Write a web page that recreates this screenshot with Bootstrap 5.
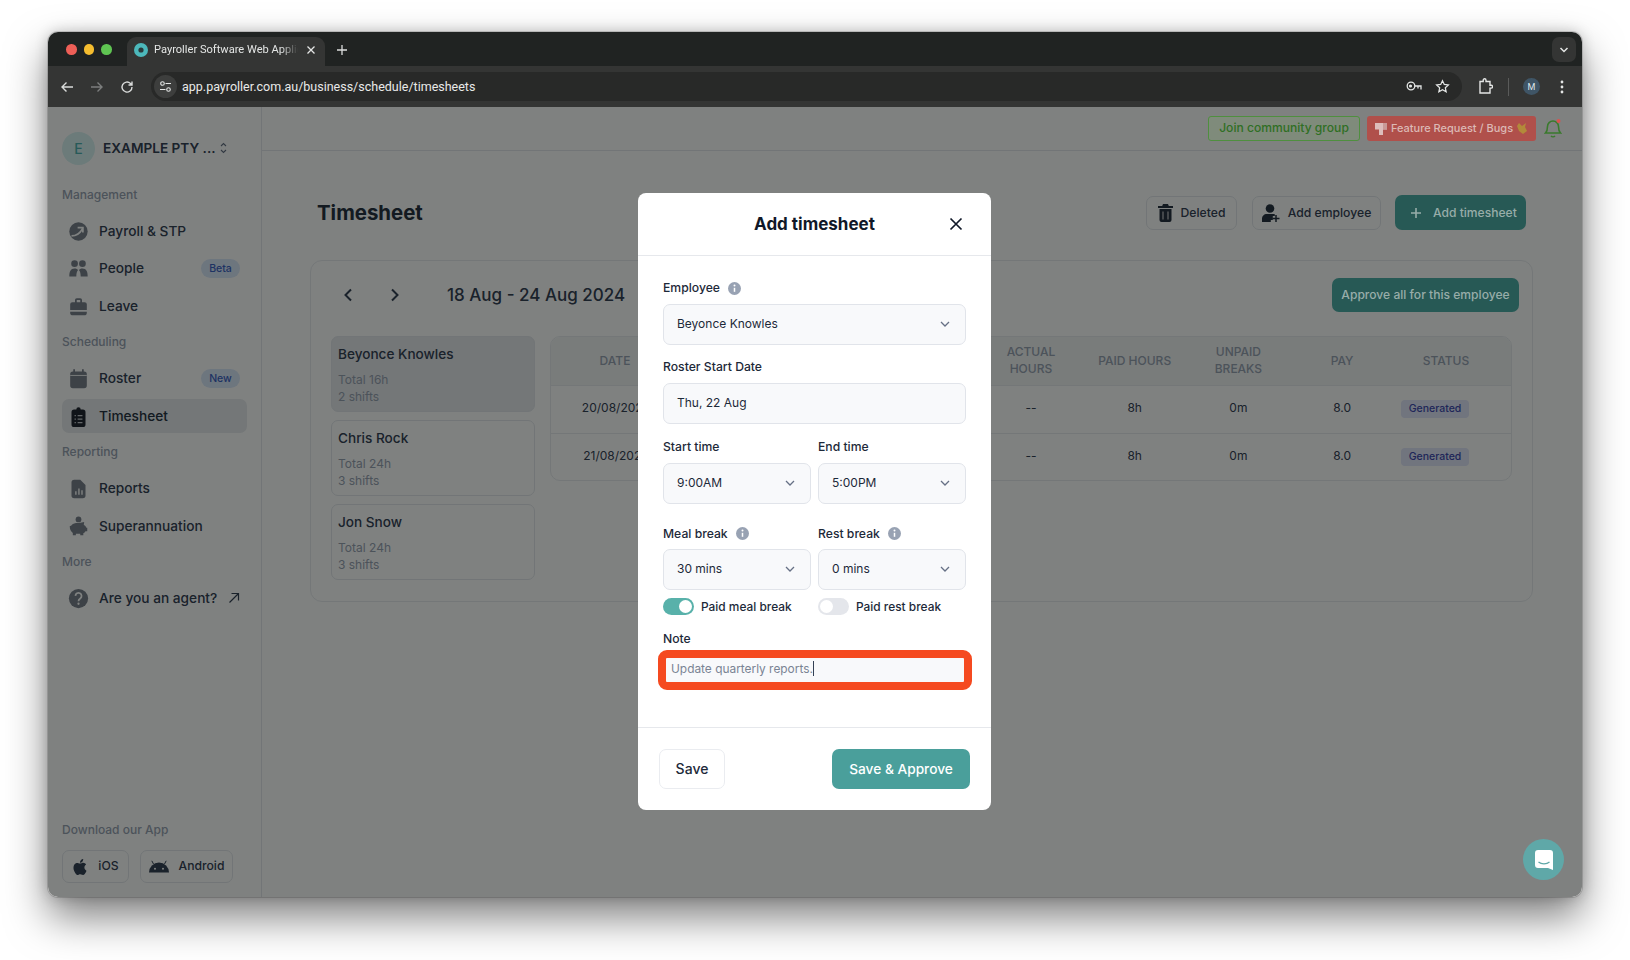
<!doctype html>
<html>
<head>
  <meta charset="utf-8">
  <title>Timesheet</title>
  <link href="https://cdn.jsdelivr.net/npm/bootstrap@5.3.0/dist/css/bootstrap.min.css" rel="stylesheet">
  <style>
    html, body { height: 100%; }
    body { background: #fff; margin: 0; padding: 32px 48px 63px; overflow: hidden; font-family: Inter, "Liberation Sans", sans-serif; color: #344054; }
    svg { display: block; flex: none; }

    /* browser window */
    .browser { height: 865px; display: flex; flex-direction: column; border-radius: 10px; overflow: hidden; box-shadow: 0 0 0 1px rgba(0,0,0,.14), 0 20px 42px rgba(0,0,0,.5), 0 0 14px rgba(0,0,0,.2); background: #fff; }
    .tabstrip { height: 34px; background: #202322; display: flex; align-items: flex-end; padding-left: 18px; flex: none; }
    .lights { width: 61px; height: 100%; display: flex; align-items: center; gap: 7px; padding-top: 1px; }
    .lights i { width: 10.5px; height: 10.5px; border-radius: 50%; }
    .chrome-tab { width: 198px; height: 29px; background: #343534; border-radius: 9px 9px 0 0; display: flex; align-items: center; padding: 0 9px 4px 7px; color: #e4e6e5; font: 11.1px Roboto, "Liberation Sans", sans-serif; }
    .tab-title { width: 144px; margin-left: 6px; overflow: hidden; white-space: nowrap; -webkit-mask-image: linear-gradient(90deg, #000 88%, transparent); mask-image: linear-gradient(90deg, #000 88%, transparent); }
    .new-tab { margin: 0 0 10px 11px; }
    .tab-list { width: 24px; height: 25px; background: #343534; border-radius: 7px; margin: 0 6px 4px auto; display: flex; align-items: center; justify-content: center; }
    .toolbar { height: 41px; background: #343534; display: flex; align-items: center; padding: 0 0 0 11px; flex: none; }
    .toolbar > svg { margin-right: 14px; }
    .omnibox { width: 1311px; height: 29px; margin-left: 2px; margin-right: 16px; background: #282928; border-radius: 15px; display: flex; align-items: center; padding: 0 12px 0 3px; color: #e8e9e8; font: 12.5px Roboto, "Liberation Sans", sans-serif; gap: 5px; flex: none; }
    .site-chip { width: 23px; height: 23px; border-radius: 50%; background: #3d3e3d; display: flex; align-items: center; justify-content: center; }
    .profile-dot { width: 17px; height: 17px; border-radius: 50%; background: #3f5566; color: #dfe6ea; font: 9px Roboto, sans-serif; display: flex; align-items: center; justify-content: center; margin: 0 20px 0 14px; }
    .tool-sep { width: 1px; height: 18px; background: #5a5b5a; margin-left: 1px; }

    /* app */
    .appframe { flex: 1; position: relative; display: flex; background: #fff; min-height: 0; }
    .dim-layer { position: absolute; inset: 0; background: rgba(0,4,2,.5); z-index: 5; }
    .sidebar { width: 214px; flex: none; border-right: 1px solid #e4e7ec; padding: 24px 14px 0; display: flex; flex-direction: column; }
    .workspace { display: flex; align-items: center; height: 34px; margin-bottom: 22px; font-weight: 600; font-size: 13.6px; color: #344054; white-space: nowrap; }
    .ws-avatar { width: 33px; height: 33px; border-radius: 50%; background: #d8f2f2; color: #4fb0b0; display: flex; align-items: center; justify-content: center; margin-right: 8px; font-weight: 500; font-size: 14px; }
    .side-head { font-size: 12px; font-weight: 500; color: #98a2b3; height: 16px; line-height: 16px; margin-bottom: 11.2px; }
    .side-item { height: 34px; margin-bottom: 3.5px; display: flex; align-items: center; padding: 0 7px 0 6px; border-radius: 7px; font-size: 13.7px; font-weight: 500; color: #344054; white-space: nowrap; }
    .side-item > svg:first-child { margin-right: 10px; width: 21px; height: 21px; color: #7a808c; }
    .side-item.on { background: #e8eaee; color: #263040; }
    .side-item.on > svg:first-child { color: #202530; }
    .side-tag { margin-left: auto; width: 39px; height: 19px; border-radius: 10px; background: #dbe8fb; color: #3d62c4; font-size: 10.5px; font-weight: 500; display: flex; align-items: center; justify-content: center; }
    .side-group { margin-top: 7.7px; }
    .app-links { margin-top: auto; padding-bottom: 14px; }
    .app-links .side-head { margin-bottom: 12px; }
    .store-row { display: flex; gap: 11px; }
    .store-btn { height: 33px; border: 1px solid #e4e7ec; border-radius: 7px; display: flex; align-items: center; justify-content: center; font-size: 12.2px; font-weight: 500; color: #344054; gap: 10px; }

    .workarea { flex: 1; min-width: 0; }
    .top-strip { height: 44px; border-bottom: 1px solid #e4e7ec; display: flex; align-items: flex-start; justify-content: flex-end; padding: 9px 20px 0 0; }
    .community-btn { position: relative; z-index: 6; height: 25px; width: 152px; border: 1px solid #4f8f3f; border-radius: 3px; background: #7f8b7b; color: #2f6f24; font-size: 12.1px; font-weight: 500; display: flex; align-items: center; justify-content: center; white-space: nowrap; }
    .feature-btn { position: relative; z-index: 6; height: 25px; width: 169px; margin-left: 7px; border-radius: 3px; background: #b0504b; color: #dcb9b5; font-size: 11px; font-weight: 500; display: flex; align-items: center; justify-content: center; gap: 4px; white-space: nowrap; }
    .bell-wrap { position: relative; z-index: 6; margin: 2px 0 0 8px; }
    .page-head { display: flex; align-items: center; height: 35px; margin: 44px 56px 0 55px; }
    .page-title { font-size: 20.4px; font-weight: 700; margin: 1px auto 0 0; color: #263040; }
    .plain-btn { height: 34px; padding-top: 1px; border: 1px solid #e4e7ec; border-radius: 7px; display: flex; align-items: center; justify-content: center; gap: 8px; font-size: 12.2px; font-weight: 500; color: #344054; white-space: nowrap; }
    .teal-dim { position: relative; z-index: 6; background: #275955; border-radius: 7px; color: #98ada9; display: flex; align-items: center; font-size: 12.1px; font-weight: 500; white-space: nowrap; }

    .sheet-card { margin: 30px 49px 0 48px; height: 342px; border: 1px solid #e9ebef; border-radius: 12px; padding: 17px 20px 0 20px; }
    .sheet-nav { display: flex; align-items: center; height: 34px; margin-bottom: 24px; }
    .sheet-nav > svg { margin-left: 12px; margin-right: 25px; }
    .sheet-date { font-size: 17px; font-weight: 500; margin-left: 22px; padding-top: 1px; color: #344054; }
    .sheet-body { display: flex; gap: 15px; align-items: flex-start; }
    .emp-list { width: 204px; flex: none; display: flex; flex-direction: column; gap: 8px; }
    .emp-card { height: 76px; border: 1px solid #e4e7ec; border-radius: 7px; padding: 7px 6px; font-size: 12px; line-height: 17px; color: #98a2b3; }
    .emp-card.on { background: #e8eaee; }
    .emp-name { font-size: 13.6px; font-weight: 500; color: #344054; line-height: 20px; margin-bottom: 7px; }
    .sheet-table-wrap { flex: 1; border: 1px solid #e9ebef; border-radius: 10px; overflow: hidden; height: 145px; }
    .sheet-table { width: 100%; table-layout: fixed; margin: 0; font-size: 12px; }
    .sheet-table th, .sheet-table td { height: 48px; text-align: center; vertical-align: middle; padding: 0 6px; border-bottom: 1px solid #e9ebef; }
    .sheet-table th { background: #f2f4f5; font-weight: 500; color: #98a2b3; font-size: 12px; line-height: 17px; padding-bottom: 1px; }
    .sheet-table td { color: #344054; white-space: nowrap; padding: 0 0 2px; }
    .sheet-table td:first-child { padding-left: 13px; }
    .sheet-table th:first-child { padding-left: 17px; }
    .sheet-table td:last-child { padding-right: 13px; }
    .sheet-table th:last-child { padding-right: 19px; }
    .col-edge { width: 117px; }
    .status-tag { display: inline-block; background: #e2e6fa; color: #3f49b0; border-radius: 4px; font-size: 10.5px; font-weight: 500; line-height: 18px; padding: 0 8px; margin-left: -22px; }

    /* dialog */
    .sheet-modal { position: absolute; left: 590px; top: 86px; width: 353px; height: 617px; z-index: 7; border: 0; border-radius: 8px; overflow: hidden; background: #fff; }
    .sheet-modal .modal-header { height: 63px; flex: none; padding: 2px 25px 0; justify-content: center; position: relative; border-bottom: 1px solid #e6e8ec; }
    .sheet-modal .modal-title { font-size: 17px; font-weight: 700; color: #101828; }
    .sheet-modal .close-x { position: absolute; right: 28px; top: 24px; }
    .sheet-modal .modal-body { padding: 24px 25px 0; height: 471px; flex: none; }
    .sheet-modal .modal-footer { border-top: 1px solid #e6e8ec; padding: 21px; flex: 1; align-items: flex-start; display: flex; justify-content: space-between; flex-wrap: nowrap; }
    .sheet-modal .modal-footer > * { margin: 0; }
    .fld-label { display: flex; align-items: center; gap: 8px; font-size: 12.2px; font-weight: 500; color: #1d2939; height: 16px; margin-bottom: 7.6px; }
    .fld-box { height: 41px; border: 1px solid #e1e4ea; border-radius: 7px; background: #f8f9fb; display: flex; align-items: center; justify-content: space-between; padding: 0 15px 1px 13px; font-size: 12px; color: #1d2939; margin-bottom: 15px; }
    .fld-row { display: grid; grid-template-columns: 1fr 1fr; column-gap: 7px; }
    .fld-row .fld-box { margin-bottom: 0; }
    .fld-row + .fld-row { margin-top: 22px; }
    .toggle-line { display: flex; align-items: center; gap: 7px; height: 17px; margin: 8px 0 0; font-size: 11.9px; font-weight: 500; color: #1d2939; }
    .toggle-pill { width: 31px; height: 17px; border-radius: 9px; background: #e4e6eb; position: relative; flex: none; }
    .toggle-pill::after { content: ""; position: absolute; left: 2px; top: 2px; width: 13px; height: 13px; border-radius: 50%; background: #fff; }
    .toggle-pill.lit { background: #58b1aa; }
    .toggle-pill.lit::after { left: 16px; }
    .note-label { margin: 16px 0 2.6px; }
    .note-mark { margin: 0 -6px 0 -5px; height: 40px; border: 8px solid #f54a20; border-radius: 9px; background: #f8f9fb; display: flex; align-items: center; padding: 0 5px 3px; font-size: 11.9px; color: #7a8494; }
    .caret-bar { width: 1px; height: 15px; background: #344054; }
    .save-btn { width: 66px; height: 40px; background: #fff; border: 1px solid #eaecf0; border-radius: 7px; font-size: 14px; font-weight: 500; color: #1d2939; padding: 0 0 2px; }
    .approve-btn { width: 138px; height: 40px; background: #4a9f9b; border: 0; border-radius: 7px; font-size: 13.7px; font-weight: 500; color: #fff; padding: 0; }
    .chat-fab { position: absolute; right: 18px; bottom: 17px; width: 41px; height: 41px; border-radius: 50%; background: #5fa8a8; z-index: 6; display: flex; align-items: center; justify-content: center; }
  </style>
</head>
<body>
  <div class="browser">
    <!-- browser chrome -->
    <div class="tabstrip">
      <div class="lights"><i style="background:#ee5f57"></i><i style="background:#f5bd2f"></i><i style="background:#5fc552"></i></div>
      <div class="chrome-tab">
        <svg width="14" height="14" viewBox="0 0 14 14"><circle cx="7" cy="7" r="7" fill="#4cb8bb"/><circle cx="7" cy="7" r="2.6" fill="#2b3a3c"/></svg>
        <span class="tab-title">Payroller Software Web Applic</span>
        <svg class="ms-auto" width="10" height="10" viewBox="0 0 10 10"><path d="M1.5 1.5l7 7M8.5 1.5l-7 7" stroke="#e4e6e5" stroke-width="1.3"/></svg>
      </div>
      <svg class="new-tab" width="12" height="12" viewBox="0 0 12 12"><path d="M6 1v10M1 6h10" stroke="#dcdedd" stroke-width="1.3"/></svg>
      <div class="tab-list"><svg width="10" height="6" viewBox="0 0 10 6"><path d="M1.5 1L5 4.5 8.5 1" fill="none" stroke="#e4e6e5" stroke-width="1.5"/></svg></div>
    </div>
    <div class="toolbar">
      <svg width="16" height="16" viewBox="0 0 16 16"><path d="M14 8H3M7.5 3.5L3 8l4.5 4.5" fill="none" stroke="#d9dbda" stroke-width="1.4"/></svg>
      <svg width="16" height="16" viewBox="0 0 16 16"><path d="M2 8h11M8.5 3.5L13 8l-4.5 4.5" fill="none" stroke="#7c7e7d" stroke-width="1.4"/></svg>
      <svg width="16" height="16" viewBox="0 0 16 16"><path d="M13 8a5 5 0 1 1-1.5-3.5L13 6M13 2.5V6H9.5" fill="none" stroke="#d9dbda" stroke-width="1.4"/></svg>
      <div class="omnibox">
        <span class="site-chip"><svg width="13" height="13" viewBox="0 0 13 13" fill="none" stroke="#e4e6e5" stroke-width="1.1"><circle cx="3.5" cy="3.5" r="1.8"/><path d="M6.5 3.5H12M1 9.5h5.5"/><circle cx="9.5" cy="9.5" r="1.8"/></svg></span>
        <span>app.payroller.com.au/business/schedule/timesheets</span>
        <svg class="ms-auto" width="16" height="14" viewBox="0 0 16 14" fill="none" stroke="#e4e6e5" stroke-width="1.3"><circle cx="5" cy="6" r="3.8"/><circle cx="4.5" cy="6" r=".9" fill="#e4e6e5"/><path d="M8.8 6H15v3.5M12 6v2.5"/></svg>
        <svg class="ms-2" width="15" height="15" viewBox="0 0 16 16" fill="none" stroke="#e4e6e5" stroke-width="1.3"><path d="M8 1.8l1.9 4 4.4.5-3.300 3 .9 4.400L8 11.500l-3.900 2.200.9-4.400-3.300-3 4.400-.5z"/></svg>
      </div>
      <svg width="15" height="17" viewBox="0 0 15 17" fill="none" stroke="#e4e6e5" stroke-width="1.4"><path d="M2 3.500h3.200V2.200a1.400 1.400 0 0 1 2.800 0v1.300H12V7.300h1.200a1.400 1.400 0 0 1 0 2.800H12V15H2z"/></svg>
      <span class="tool-sep"></span>
      <span class="profile-dot">M</span>
      <svg width="4" height="14" viewBox="0 0 4 14" fill="#e4e6e5" style="margin:0"><circle cx="2" cy="2" r="1.4"/><circle cx="2" cy="7" r="1.4"/><circle cx="2" cy="12" r="1.4"/></svg>
    </div>

    <!-- app -->
    <div class="appframe">
      <aside class="sidebar">
        <div class="workspace">
          <span class="ws-avatar">E</span>EXAMPLE PTY ...
          <svg class="ms-1" width="7" height="12" viewBox="0 0 7 12" fill="none" stroke="#667085" stroke-width="1.1"><path d="M1 4l2.500-2.500L6 4M1 8l2.500 2.500L6 8"/></svg>
        </div>

        <div class="side-head">Management</div>
        <div class="side-item">
          <svg viewBox="0 0 24 24"><circle cx="12" cy="12" r="10.5" fill="currentColor"/><path d="M4 17c4 0 9-1.500 12.500-8M11 7.500h6V13" fill="none" stroke="#fff" stroke-width="2"/></svg>Payroll &amp; STP
        </div>
        <div class="side-item">
          <svg viewBox="0 0 24 24" fill="currentColor"><circle cx="7.5" cy="6.5" r="3.8"/><circle cx="16.5" cy="6.5" r="3.8"/><path d="M1.500 21c0-5.500 1.500-9 6-9 2 0 3.300.6 4 1.800-1.500 1.800-2 4.300-2 7.200zM22.500 21c0-5.500-1.500-9-6-9-2 0-3.300.6-4 1.800 1.500 1.800 2 4.300 2 7.200z"/></svg>People
          <span class="side-tag">Beta</span>
        </div>
        <div class="side-item">
          <svg viewBox="0 0 24 24" fill="currentColor"><path d="M8 7V4.500A2 2 0 0 1 10 2.500h4A2 2 0 0 1 16 4.500V7h3a2.500 2.500 0 0 1 2.500 2.500V16h-19V9.500A2.500 2.500 0 0 1 5 7zm2 0h4V4.500h-4z"/><path d="M2.500 18h19v1A3 3 0 0 1 18.500 22h-13A3 3 0 0 1 2.500 19z"/></svg>Leave
        </div>

        <div class="side-head side-group">Scheduling</div>
        <div class="side-item">
          <svg viewBox="0 0 24 24" fill="currentColor"><path d="M6 1.500h2v2.500h8V1.500h2V4h.5A3 3 0 0 1 21.500 7v13a3 3 0 0 1-3 3h-13a3 3 0 0 1-3-3V7a3 3 0 0 1 3-3H6z"/><path d="M2.500 8.500h19" stroke="#fff" stroke-width="1"/></svg>Roster
          <span class="side-tag">New</span>
        </div>
        <div class="side-item on">
          <svg viewBox="0 0 24 24" fill="currentColor"><path d="M7 4h2.500a2.500 2.500 0 0 1 5 0H17a3 3 0 0 1 3 3v14a3 3 0 0 1-3 3H7a3 3 0 0 1-3-3V7a3 3 0 0 1 3-3z"/><path d="M7.500 11h1.500M11 11h5.500M7.500 15h1.500M11 15h5.500M7.500 19h1.500M11 19h5.500" stroke="#c8cbd0" stroke-width="1.5"/></svg>Timesheet
        </div>

        <div class="side-head side-group">Reporting</div>
        <div class="side-item">
          <svg viewBox="0 0 24 24" fill="currentColor"><path d="M7 2h7l6 6v12a3 3 0 0 1-3 3H7a3 3 0 0 1-3-3V5a3 3 0 0 1 3-3z"/><path d="M9 19v-4M12.500 19v-7M16 19v-5" stroke="#fff" stroke-width="1.6"/></svg>Reports
        </div>
        <div class="side-item">
          <svg viewBox="0 0 24 24" fill="currentColor"><circle cx="12" cy="5" r="3.3"/><path d="M2 12.500c1 0 1.500-.3 2.500-1.500 1.500-1.500 3-2 7.500-2 3.500 0 4.500-1 6.500-1l-.5 3c1.500 1 2.500 2 3 3.500h1v4h-2c-.5 1-1.500 1.700-2.500 2.300V23h-3.500v-1.500h-5V23H5.500v-2.500C3 18.500 2 16 2 12.500z"/></svg>Superannuation
        </div>

        <div class="side-head side-group">More</div>
        <div class="side-item">
          <svg viewBox="0 0 24 24"><circle cx="12" cy="12" r="11" fill="currentColor"/><path d="M8.500 9a3.500 3.500 0 1 1 5.500 3c-1.300.9-2 1.500-2 3" fill="none" stroke="#fff" stroke-width="2"/><circle cx="12" cy="18" r="1.3" fill="#fff"/></svg>Are you an agent?
          <svg class="ms-auto" width="12" height="12" viewBox="0 0 12 12" fill="none" stroke="#344054" stroke-width="1.2"><path d="M1.500 10.500l9-9M3.500 1.500h7v7"/></svg>
        </div>

        <div class="app-links">
          <div class="side-head">Download our App</div>
          <div class="store-row">
            <div class="store-btn" style="width:67px">
              <svg width="16" height="18" viewBox="0 0 16 16" fill="#344054"><path d="M11.182.008C11.148-.03 9.923.023 8.857 1.180c-1.066 1.156-.902 2.482-.878 2.516.024.034 1.520.087 2.475-1.258.955-1.345.762-2.391.728-2.430zm3.314 11.733c-.048-.096-2.325-1.234-2.113-3.422.212-2.189 1.675-2.789 1.698-2.854.023-.065-.597-.79-1.254-1.157a3.692 3.692 0 0 0-1.563-.434c-.108-.003-.483-.095-1.254.116-.508.139-1.653.589-1.968.607-.316.018-1.256-.522-2.267-.665-.647-.1-1.333.105-1.824.303-.49.198-1.422.761-2.074 2.244-.652 1.482-.311 3.830-.067 4.560.244.729.625 1.924 1.273 2.796.576.984 1.340 1.667 1.659 1.899.319.232 1.219.386 1.843.067.502-.308 1.408-.485 1.766-.472.357.013 1.061.154 1.782.539.571.197 1.111.115 1.652-.105.541-.221 1.324-1.059 2.238-2.758.347-.79.505-1.217.473-1.282z"/></svg>iOS
            </div>
            <div class="store-btn" style="width:93px">
              <svg width="20" height="13" viewBox="0 0 20 13" fill="#344054"><path d="M0 12.500a10 10 0 0 1 20 0z"/><path d="M4.500 4L2.800.8M15.500 4l1.700-3.200" stroke="#344054" stroke-width="1"/><circle cx="6" cy="8.800" r="1" fill="#fff"/><circle cx="14" cy="8.800" r="1" fill="#fff"/></svg>Android
            </div>
          </div>
        </div>
      </aside>

      <main class="workarea">
        <div class="top-strip">
          <div class="community-btn">Join community group</div>
          <div class="feature-btn">
            <svg width="12" height="12" viewBox="0 0 12 12"><path d="M0 0h12v6.500H8V12H4V6.500H0z" fill="#ddbdbb"/><path d="M8 0h4v6.500H8z" fill="#c99a97"/></svg>
            Feature Request / Bugs
            <svg width="11" height="13" viewBox="0 0 11 13"><path d="M2 1l3 3 4-3-1 4 2 4-4 3-4-3-2-5z" fill="#b38a3a"/></svg>
          </div>
          <div class="bell-wrap">
            <svg width="18" height="20" viewBox="0 0 18 20" fill="none" stroke="#3a7a2c" stroke-width="1.6"><path d="M1.500 15c1.500-1.500 2-3 2-6.500a5.500 5.500 0 0 1 11 0c0 3.500.5 5 2 6.500zM7 18c1 1 3 1 4 0"/><circle cx="14.5" cy="3" r="2" fill="#d9534f" stroke="none"/></svg>
          </div>
        </div>

        <div class="page-head">
          <h1 class="page-title">Timesheet</h1>
          <div class="plain-btn" style="width:91px">
            <svg width="15" height="18" viewBox="0 0 15 18" fill="#263040"><path d="M5 0h5l.8 2H15v2H0V2h4.200z"/><path d="M1.500 5h12v11a2 2 0 0 1-2 2h-8a2 2 0 0 1-2-2z"/><path d="M5 7.500v8M10 7.500v8" stroke="#b0b3b8" stroke-width="1.4"/></svg>Deleted
          </div>
          <div class="plain-btn" style="width:129px;margin-left:15px">
            <svg width="18" height="18" viewBox="0 0 18 18" fill="#263040"><circle cx="8" cy="4.500" r="4.300"/><path d="M0 18v-3c0-3 2-5 5-5h6c.7 0 1.300.1 1.800.3V12h-2v4h-2v2z"/><path d="M14 11v7M10.500 14.500H17.500" stroke="#263040" stroke-width="1.5"/></svg>Add employee
          </div>
          <div class="teal-dim" style="width:131px;height:35px;margin-left:14px;padding:1px 0 0 15px;gap:11px">
            <svg width="12" height="12" viewBox="0 0 12 12"><path d="M6 1v10M1 6h10" stroke="#98ada9" stroke-width="1.6"/></svg>Add timesheet
          </div>
        </div>

        <div class="sheet-card">
          <div class="sheet-nav">
            <svg width="10" height="14" viewBox="0 0 10 14"><path d="M8 1.500L2.500 7 8 12.500" fill="none" stroke="#344054" stroke-width="2"/></svg>
            <svg width="10" height="14" viewBox="0 0 10 14"><path d="M2 1.500L7.500 7 2 12.500" fill="none" stroke="#344054" stroke-width="2"/></svg>
            <span class="sheet-date">18 Aug - 24 Aug 2024</span>
            <div class="teal-dim justify-content-center" style="width:187px;height:34px;margin:0 -7px 0 auto">Approve all for this employee</div>
          </div>
          <div class="sheet-body">
            <div class="emp-list">
              <div class="emp-card on"><div class="emp-name">Beyonce Knowles</div>Total 16h<br>2 shifts</div>
              <div class="emp-card"><div class="emp-name">Chris Rock</div>Total 24h<br>3 shifts</div>
              <div class="emp-card"><div class="emp-name">Jon Snow</div>Total 24h<br>3 shifts</div>
            </div>
            <div class="sheet-table-wrap">
              <table class="sheet-table">
                <colgroup><col class="col-edge"><col><col><col><col><col><col><col><col class="col-edge"></colgroup>
                <thead>
                  <tr><th>DATE</th><th></th><th></th><th></th><th>ACTUAL HOURS</th><th>PAID HOURS</th><th>UNPAID BREAKS</th><th>PAY</th><th>STATUS</th></tr>
                </thead>
                <tbody>
                  <tr><td>20/08/2024</td><td></td><td></td><td></td><td>--</td><td>8h</td><td>0m</td><td>8.0</td><td><span class="status-tag">Generated</span></td></tr>
                  <tr><td>21/08/2024</td><td></td><td></td><td></td><td>--</td><td>8h</td><td>0m</td><td>8.0</td><td><span class="status-tag">Generated</span></td></tr>
                </tbody>
              </table>
            </div>
          </div>
        </div>
      </main>

      <div class="dim-layer"></div>

      <div class="modal-content sheet-modal">
        <div class="modal-header">
          <h5 class="modal-title">Add timesheet</h5>
          <svg class="close-x" width="14" height="14" viewBox="0 0 14 14"><path d="M1.500 1.500l11 11M12.500 1.500l-11 11" stroke="#101828" stroke-width="1.7"/></svg>
        </div>
        <div class="modal-body">
          <div class="fld-label">Employee <svg width="13" height="13" viewBox="0 0 13 13"><circle cx="6.5" cy="6.5" r="6.5" fill="#98a2b3"/><path d="M6.500 5.800v4" stroke="#fff" stroke-width="1.5"/><circle cx="6.5" cy="3.6" r="1" fill="#fff"/></svg></div>
          <div class="fld-box">Beyonce Knowles <svg width="10" height="6" viewBox="0 0 10 6"><path d="M1 1l4 4 4-4" fill="none" stroke="#667085" stroke-width="1.3"/></svg></div>
          <div class="fld-label">Roster Start Date</div>
          <div class="fld-box">Thu, 22 Aug</div>
          <div class="fld-row">
            <div>
              <div class="fld-label">Start time</div>
              <div class="fld-box">9:00AM <svg width="10" height="6" viewBox="0 0 10 6"><path d="M1 1l4 4 4-4" fill="none" stroke="#667085" stroke-width="1.3"/></svg></div>
            </div>
            <div>
              <div class="fld-label">End time</div>
              <div class="fld-box">5:00PM <svg width="10" height="6" viewBox="0 0 10 6"><path d="M1 1l4 4 4-4" fill="none" stroke="#667085" stroke-width="1.3"/></svg></div>
            </div>
          </div>
          <div class="fld-row">
            <div>
              <div class="fld-label">Meal break <svg width="13" height="13" viewBox="0 0 13 13"><circle cx="6.5" cy="6.5" r="6.5" fill="#98a2b3"/><path d="M6.500 5.800v4" stroke="#fff" stroke-width="1.5"/><circle cx="6.5" cy="3.6" r="1" fill="#fff"/></svg></div>
              <div class="fld-box">30 mins <svg width="10" height="6" viewBox="0 0 10 6"><path d="M1 1l4 4 4-4" fill="none" stroke="#667085" stroke-width="1.3"/></svg></div>
              <div class="toggle-line"><span class="toggle-pill lit"></span>Paid meal break</div>
            </div>
            <div>
              <div class="fld-label">Rest break <svg width="13" height="13" viewBox="0 0 13 13"><circle cx="6.5" cy="6.5" r="6.5" fill="#98a2b3"/><path d="M6.500 5.800v4" stroke="#fff" stroke-width="1.5"/><circle cx="6.5" cy="3.6" r="1" fill="#fff"/></svg></div>
              <div class="fld-box">0 mins <svg width="10" height="6" viewBox="0 0 10 6"><path d="M1 1l4 4 4-4" fill="none" stroke="#667085" stroke-width="1.3"/></svg></div>
              <div class="toggle-line"><span class="toggle-pill"></span>Paid rest break</div>
            </div>
          </div>
          <div class="fld-label note-label">Note</div>
          <div class="note-mark">Update quarterly reports.<span class="caret-bar"></span></div>
        </div>
        <div class="modal-footer">
          <button class="btn save-btn" type="button">Save</button>
          <button class="btn approve-btn" type="button">Save &amp; Approve</button>
        </div>
      </div>

      <div class="chat-fab">
        <svg width="18" height="20" viewBox="0 0 18 20"><path d="M3 0h12a3 3 0 0 1 3 3v17l-5-2H3a3 3 0 0 1-3-3V3a3 3 0 0 1 3-3z" fill="#fff"/><path d="M3.500 12c3 2.500 8 2.500 11 0" fill="none" stroke="#5fa8a8" stroke-width="1.2"/></svg>
      </div>
    </div>
  </div>
  <script src="https://cdn.jsdelivr.net/npm/bootstrap@5.3.0/dist/js/bootstrap.bundle.min.js"></script>
</body>
</html>
